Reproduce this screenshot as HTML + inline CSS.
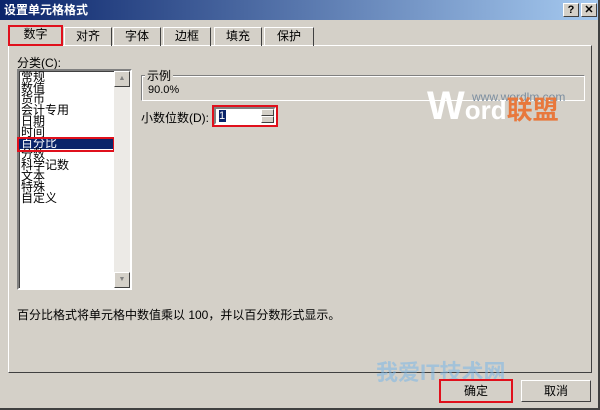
<!DOCTYPE html><html><head><meta charset="utf-8"><style>
*{margin:0;padding:0;box-sizing:border-box}
body{width:600px;height:410px;background:#d4d0c8;position:relative;overflow:hidden;font:12px "Liberation Sans","Noto Sans CJK SC",sans-serif;color:#000}
.a{position:absolute}
.title{left:0;top:0;width:600px;height:20px;background:linear-gradient(90deg,#0a246a,#a6caf0);color:#fff;font-weight:bold;font-size:12px;line-height:20px;padding-left:4px}
.tb{width:16px;height:14px;top:3px;background:#d4d0c8;border:1px solid;border-color:#fff #404040 #404040 #fff;font-size:11px;font-weight:bold;text-align:center;line-height:12px;color:#000}
.tab{top:27px;height:19px;border:1px solid;border-color:#fff #404040 transparent #fff;border-bottom:none;text-align:center;line-height:17px;font-size:12px}
.panel{left:8px;top:45px;width:584px;height:328px;border:1px solid;border-color:#fff #404040 #404040 #fff}
.red{border:2px solid #e0101c}
.list{left:17px;top:69px;width:115px;height:221px;background:#fff;border:2px solid;border-color:#808080 #fff #fff #808080;box-shadow:inset 1px 1px 0 #404040}
.list div{font-size:12px;line-height:11px;height:11px;padding-left:2px;white-space:nowrap}
.sb{left:114px;top:71px;width:16px;height:217px;background:#eceae6}
.btn{background:#d4d0c8;border:1px solid;border-color:#fff #404040 #404040 #fff;text-align:center}
</style></head><body>
<div class="a title">设置单元格格式</div>
<div class="a tb" style="left:563px">?</div>
<div class="a tb" style="left:581px">✕</div>
<div class="a panel"></div>
<div class="a tab" style="left:8px;top:25px;width:55px;height:21px;background:#d4d0c8">数字</div>
<div class="a red" style="left:8px;top:25px;width:55px;height:21px"></div>
<div class="a tab" style="left:64px;width:48px">对齐</div>
<div class="a tab" style="left:113px;width:48px">字体</div>
<div class="a tab" style="left:163px;width:48px">边框</div>
<div class="a tab" style="left:214px;width:48px">填充</div>
<div class="a tab" style="left:264px;width:50px">保护</div>
<div class="a" style="left:17px;top:54px">分类(C):</div>
<div class="a list">
<div style="margin-top:1px">常规</div><div>数值</div><div>货币</div><div>会计专用</div><div>日期</div><div>时间</div>
<div style="background:#0a246a;color:#fff;width:96px">百分比</div><div>分数</div><div>科学记数</div><div>文本</div><div>特殊</div><div>自定义</div>
</div>
<div class="a red" style="left:17px;top:137px;width:98px;height:15px"></div>
<div class="a sb"></div>
<div class="a btn" style="left:114px;top:71px;width:16px;height:16px;font-size:7px;line-height:14px;color:#808080">▲</div>
<div class="a btn" style="left:114px;top:272px;width:16px;height:16px;font-size:7px;line-height:14px;color:#808080">▼</div>
<div class="a" style="left:141px;top:75px;width:444px;height:26px;border:1px solid;border-color:#808080 #fff #fff #808080;box-shadow:1px 1px 0 #fff inset"></div>
<div class="a" style="left:145px;top:67px;background:#d4d0c8;padding:0 2px">示例</div>
<div class="a" style="left:148px;top:84px;font-size:11px">90.0%</div>
<div class="a" style="left:141px;top:109px">小数位数(D):</div>
<div class="a" style="left:214px;top:107px;width:62px;height:18px;background:#fff;border:2px solid;border-color:#808080 #fff #fff #808080"></div>
<div class="a" style="left:219px;top:110px;width:7px;height:12px;background:#0a246a;color:#fff;font-size:11px;line-height:12px">1</div>
<div class="a btn" style="left:261px;top:109px;width:13px;height:7px"></div>
<div class="a btn" style="left:261px;top:116px;width:13px;height:7px"></div>
<div class="a red" style="left:212px;top:105px;width:66px;height:22px"></div>
<div class="a" style="left:472px;top:90px;color:#7c8ea0;font-size:12px">www.wordlm.com</div>
<div class="a" style="left:427px;top:84px;color:#fff;font-size:40px;font-weight:bold">W<span style="font-size:26px">ord</span><span style="color:#e8783c;font-size:26px">联盟</span></div>
<div class="a" style="left:17px;top:306px">百分比格式将单元格中数值乘以 100，并以百分数形式显示。</div>
<div class="a" style="left:376px;top:355px;color:#7cb8e8;font-size:22px;font-weight:bold;opacity:.55">我爱IT技术网</div>
<div class="a btn" style="left:440px;top:380px;width:72px;height:22px;line-height:20px">确定</div>
<div class="a red" style="left:439px;top:379px;width:74px;height:24px"></div>
<div class="a btn" style="left:521px;top:380px;width:70px;height:22px;line-height:20px">取消</div>
<div class="a" style="left:0;top:408px;width:600px;height:2px;background:#404040"></div>
<div class="a" style="left:598px;top:0;width:2px;height:410px;background:#404040"></div>
</body></html>
